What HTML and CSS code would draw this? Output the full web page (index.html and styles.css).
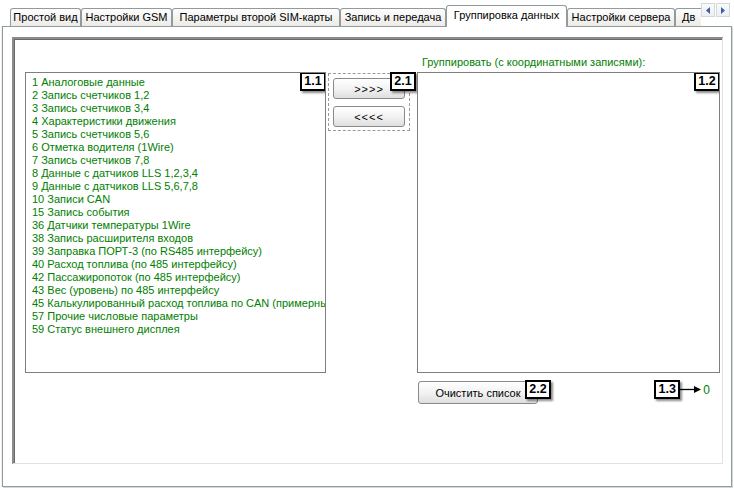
FILE: index.html
```html
<!DOCTYPE html>
<html lang="ru">
<head>
<meta charset="utf-8">
<title>Группировка данных</title>
<link rel="stylesheet" href="styles.css">
</head>
<body>
<div class="window">
  <div class="tabbar">
    <div class="tabs">
      <div class="tab w1">Простой вид</div>
      <div class="tab w2">Настройки GSM</div>
      <div class="tab w3">Параметры второй SIM-карты</div>
      <div class="tab w4">Запись и передача</div>
      <div class="tab active w5">Группировка данных</div>
      <div class="tab w6">Настройки сервера</div>
      <div class="tab w7">Дв</div>
    </div>
    <div class="scroller">
      <div class="sbtn"><svg width="6" height="7" viewBox="0 0 6 7"><polygon points="5,0 5,7 1,3.5" fill="#3f5fa0"/></svg></div>
      <div class="sbtn"><svg width="6" height="7" viewBox="0 0 6 7"><polygon points="1,0 1,7 5,3.5" fill="#3f5fa0"/></svg></div>
    </div>
  </div>
  <div class="panel">
    <div class="frame">
      <div class="grid">
        <div class="label">Группировать (с координатными записями):</div>
        <div class="list list-left">
          <div class="item">1 Аналоговые данные</div>
          <div class="item">2 Запись счетчиков 1,2</div>
          <div class="item">3 Запись счетчиков 3,4</div>
          <div class="item">4 Характеристики движения</div>
          <div class="item">5 Запись счетчиков 5,6</div>
          <div class="item">6 Отметка водителя (1Wire)</div>
          <div class="item">7 Запись счетчиков 7,8</div>
          <div class="item">8 Данные с датчиков LLS 1,2,3,4</div>
          <div class="item">9 Данные с датчиков LLS 5,6,7,8</div>
          <div class="item">10 Записи CAN</div>
          <div class="item">15 Запись события</div>
          <div class="item">36 Датчики температуры 1Wire</div>
          <div class="item">38 Запись расширителя входов</div>
          <div class="item">39 Заправка ПОРТ-3 (по RS485 интерфейсу)</div>
          <div class="item">40 Расход топлива (по 485 интерфейсу)</div>
          <div class="item">42 Пассажиропоток (по 485 интерфейсу)</div>
          <div class="item">43 Вес (уровень) по 485 интерфейсу</div>
          <div class="item">45 Калькулированный расход топлива по CAN (примерны</div>
          <div class="item">57 Прочие числовые параметры</div>
          <div class="item">59 Статус внешнего дисплея</div>
          <span class="badge badge-tr">1.1</span>
        </div>
        <div class="mid">
          <div class="dashed">
            <button class="btn move">&gt;&gt;&gt;&gt;</button>
            <button class="btn move">&lt;&lt;&lt;&lt;</button>
            <span class="badge badge-21">2.1</span>
          </div>
        </div>
        <div class="list list-right">
          <span class="badge badge-tr">1.2</span>
        </div>
        <div class="bottom">
          <div class="clear-wrap">
            <button class="btn clear">Очистить список</button>
            <span class="badge badge-22">2.2</span>
          </div>
          <div class="counter">
            <span class="badge">1.3</span>
            <svg class="arrow" width="21" height="9" viewBox="0 0 21 9"><line x1="0" y1="4.5" x2="15" y2="4.5" stroke="#000" stroke-width="1.3"/><polygon points="14,1 21,4.5 14,8" fill="#000"/></svg>
            <span class="count">0</span>
          </div>
        </div>
      </div>
    </div>
  </div>
</div>
</body>
</html>
```
FILE: styles.css
```css
* { box-sizing: border-box; }
html, body { margin: 0; padding: 0; background: #fff; }
body {
  font-family: "Liberation Sans", Arial, sans-serif;
  font-size: 11px;
  color: #000;
}
.window {
  width: 734px;
  height: 488px;
  background: #fff;
  overflow: hidden;
}
.tabbar {
  position: relative;
  z-index: 2;
  height: 27px;
  display: flex;
  align-items: flex-start;
}
.tabs {
  display: flex;
  align-items: flex-end;
  height: 27px;
  width: 701px;
  padding-left: 10px;
  overflow: hidden;
}
.tab {
  flex: none;
  height: 18px;
  margin-bottom: 1px;
  border: 1px solid #919b9c;
  border-bottom: none;
  border-radius: 3px 3px 0 0;
  background: linear-gradient(#fdfdfd, #ecebe7);
  text-align: center;
  line-height: 17px;
  white-space: nowrap;
  overflow: hidden;
  padding: 0;
  font-size: 11px;
}
.tab.active {
  height: 22px;
  margin-bottom: 0;
  background: #fff;
  line-height: 18px;
}
.w1 { width: 71px; }
.w2 { width: 91px; }
.w3 { width: 168px; }
.w4 { width: 106px; }
.w5 { width: 121px; }
.w6 { width: 108px; }
.w7 { width: 60px; text-align: left; padding-left: 6px; }
.scroller {
  display: flex;
  gap: 1px;
  margin-top: 3px;
}
.sbtn {
  width: 14px;
  height: 14px;
  border: 1px solid #d3d8de;
  background: linear-gradient(#fbfbfc, #eceef1);
  display: flex;
  align-items: center;
  justify-content: center;
}
.panel {
  position: relative;
  z-index: 1;
  margin: -1px 2px 0 2px;
  height: 461px;
  border: 1px solid #919b9c;
  box-shadow: 1px 1px 0 #d6d9dc, -1px 0 0 #eef0f2;
  background: #fff;
  padding: 10px 8px 0 9px;
}
.frame {
  width: 711px;
  height: 427px;
  border-top: 2px solid #8c8c8c;
  border-left: 2px solid #8c8c8c;
  border-right: 1px solid #e2e2e2;
  border-bottom: 1px solid #e2e2e2;
  box-shadow: inset 1px 1px 0 #6a6a6a;
}
.grid {
  display: grid;
  grid-template-columns: 301px 91px 303px;
  grid-template-rows: 16px 301px auto;
  padding: 17px 0 0 11px;
}
.label {
  grid-column: 3;
  grid-row: 1;
  color: #008000;
  line-height: 13px;
  padding-left: 5px;
  white-space: nowrap;
}
.list {
  position: relative;
  grid-row: 2;
  border: 1px solid #7f7f7f;
  background: #fff;
  overflow: hidden;
}
.list-left {
  grid-column: 1;
  padding: 3px 0 0 6px;
}
.list-right { grid-column: 3; }
.item {
  color: #008000;
  line-height: 13px;
  white-space: nowrap;
}
.mid {
  grid-column: 2;
  grid-row: 2;
  align-self: start;
  padding: 1px 0 0 2px;
}
.dashed {
  position: relative;
  width: 82px;
  border: 1px dashed #9a9a9a;
  padding: 4px 0 3px 4px;
  display: flex;
  flex-direction: column;
  gap: 7px;
}
.btn {
  font-family: "Liberation Sans", Arial, sans-serif;
  font-size: 11px;
  color: #000;
  border: 1px solid #8a8a8a;
  border-radius: 3px;
  background: linear-gradient(#ffffff, #f1f1f1 55%, #dedede);
  padding: 0;
  margin: 0;
}
.move {
  width: 72px;
  height: 21px;
  letter-spacing: 1px;
}
.bottom {
  grid-column: 3;
  grid-row: 3;
  display: flex;
  align-items: flex-start;
  padding: 8px 10px 0 1px;
}
.clear-wrap { position: relative; }
.clear {
  width: 120px;
  height: 23px;
}
.counter {
  margin-left: auto;
  margin-top: -1px;
  display: flex;
  align-items: center;
}
.arrow { display: block; }
.count {
  color: #008000;
  margin-left: 2px;
  font-size: 12px;
}
.badge {
  display: inline-block;
  width: 26px;
  height: 19px;
  border: 2px solid #000;
  background: #fff;
  font-weight: bold;
  font-size: 12.5px;
  line-height: 15px;
  text-align: center;
  color: #000;
  box-shadow: 2px 2px 2px rgba(0,0,0,0.45);
}
.badge-tr {
  position: absolute;
  top: -1px;
  right: -1px;
}
.badge-21 {
  position: absolute;
  top: -2px;
  left: 61px;
}
.badge-22 {
  position: absolute;
  top: -1px;
  left: 107px;
}
```
